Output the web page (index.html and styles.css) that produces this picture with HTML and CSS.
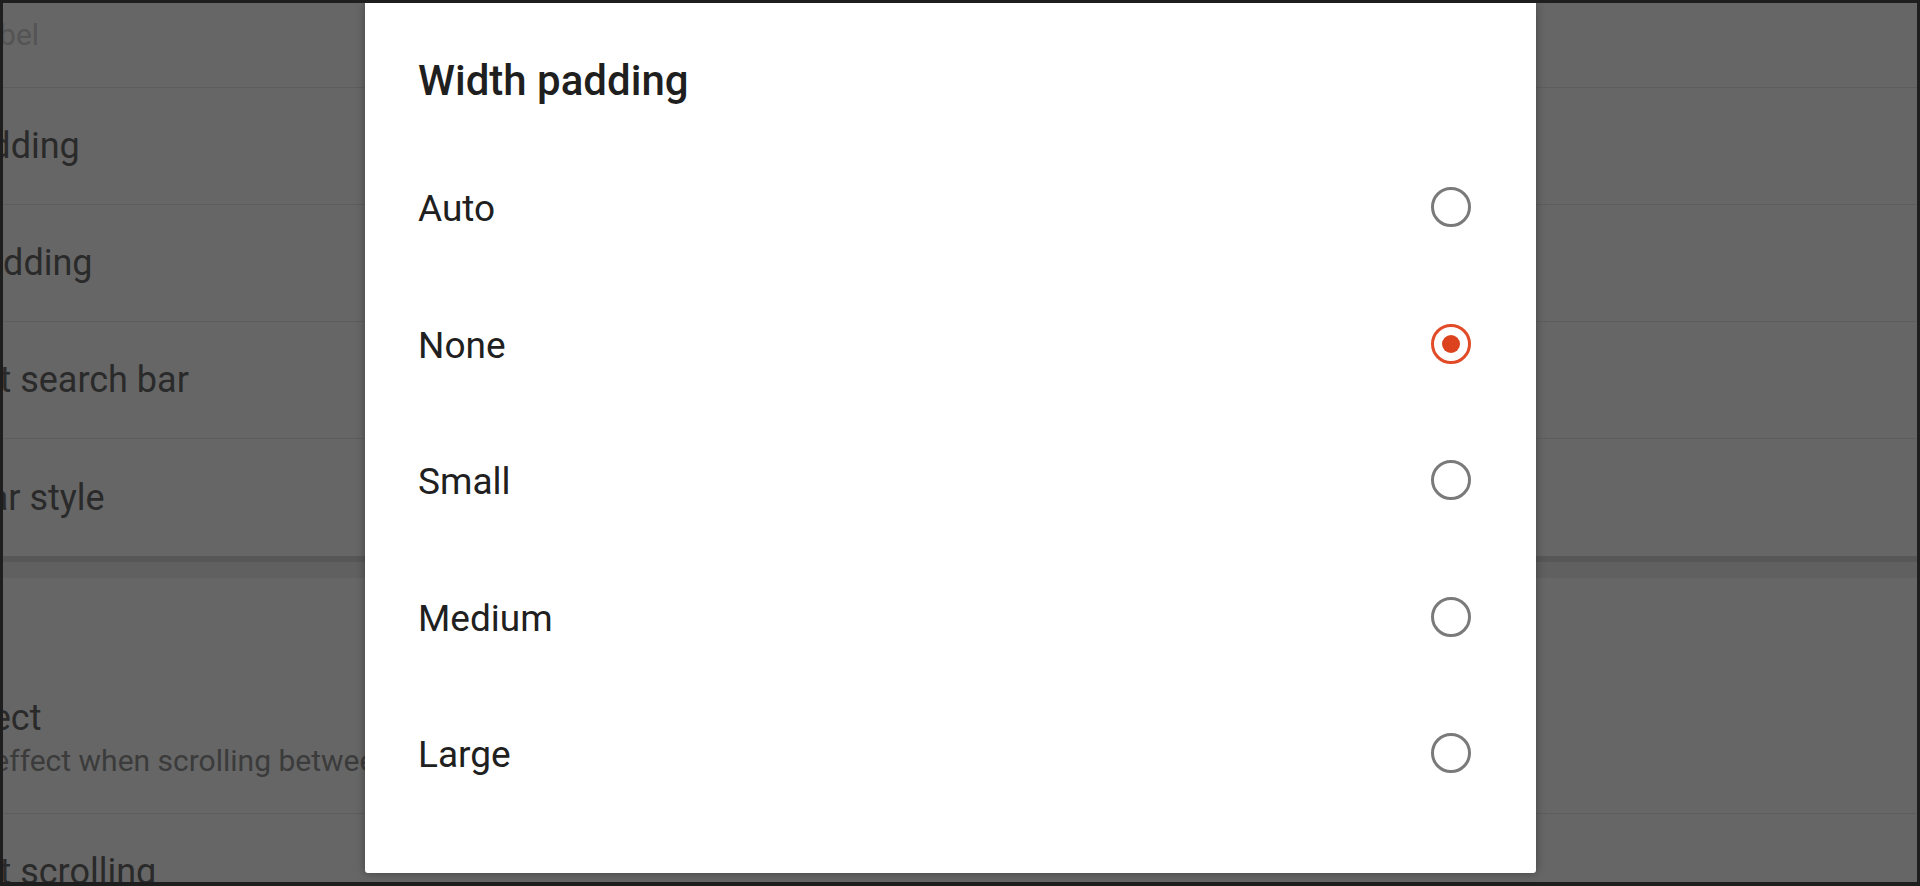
FILE: index.html
```html
<!DOCTYPE html>
<html lang="en">
<head>
<meta charset="utf-8">
<title>Width padding</title>
<link rel="stylesheet" href="styles.css">
</head>
<body>
<div class="screen">
  <div class="settings">
    <div class="row row-two first">
      <div class="row-title">Icon label</div>
      <div class="row-sub row-sub-muted">Hide app label</div>
    </div>
    <div class="row"><div class="row-title">Width padding</div></div>
    <div class="row"><div class="row-title">Height padding</div></div>
    <div class="row"><div class="row-title">Persistent search bar</div></div>
    <div class="row row-last"><div class="row-title">Search bar style</div></div>
    <div class="section-gap"></div>
    <div class="section-head"></div>
    <div class="row row-two">
      <div class="row-title">Scroll effect</div>
      <div class="row-sub">Animation effect when scrolling between pages</div>
    </div>
    <div class="row"><div class="row-title">Persistent scrolling</div></div>
  </div>

  <div class="dialog">
    <div class="dialog-title">Width padding</div>
    <div class="options">
      <div class="option"><span class="option-label">Auto</span><span class="radio"></span></div>
      <div class="option"><span class="option-label">None</span><span class="radio radio-on"></span></div>
      <div class="option"><span class="option-label">Small</span><span class="radio"></span></div>
      <div class="option"><span class="option-label">Medium</span><span class="radio"></span></div>
      <div class="option"><span class="option-label">Large</span><span class="radio"></span></div>
    </div>
  </div>
</div>
</body>
</html>
```

FILE: styles.css
```css
* { box-sizing: border-box; }

html, body {
  margin: 0;
  padding: 0;
  background: #1d1d1d;
}

body {
  font-family: Roboto, "Noto Sans", "Liberation Sans", sans-serif;
}

.screen {
  position: relative;
  width: 1920px;
  height: 886px;
  overflow: hidden;
  border-style: solid;
  border-color: #1e1e1e;
  border-width: 3px 3px 4px 3px;
  background: #666666;
}

/* dimmed settings page behind the dialog */
.settings {
  display: flex;
  flex-direction: column;
  margin-top: -55px;
  margin-left: -154px;
}

.row {
  display: flex;
  flex-direction: column;
  justify-content: center;
  height: 117px;
  border-bottom: 1px solid #5d5d5d;
  flex-shrink: 0;
}

.row-two {
  height: 140px;
  justify-content: flex-start;
  padding-top: 22px;
}

.row-last {
  border-bottom: none;
}

.row-title {
  font-size: 36px;
  line-height: 44px;
  color: #2a2a2a;
  white-space: nowrap;
}

.row-sub {
  font-size: 30px;
  line-height: 42px;
  color: #3b3b3b;
  white-space: nowrap;
}

.row-sub-muted {
  color: #545454;
}

.section-gap {
  height: 22px;
  flex-shrink: 0;
  background: linear-gradient(#575757 0, #575757 6px, #606060 6px, #606060 100%);
}

.section-head {
  height: 96px;
  flex-shrink: 0;
}

/* dialog */
.dialog {
  position: absolute;
  left: 362px;
  top: 0;
  width: 1171px;
  height: 870px;
  background: #ffffff;
  border-radius: 0 0 3px 3px;
  box-shadow: 0 0 10px rgba(0, 0, 0, 0.35);
  padding: 50px 65px 0 53px;
  display: flex;
  flex-direction: column;
}

.dialog-title {
  font-size: 42px;
  line-height: 56px;
  font-weight: 500;
  color: #1f1f1f;
}

.options {
  display: flex;
  flex-direction: column;
  margin-top: 30px;
}

.option {
  display: flex;
  align-items: center;
  justify-content: space-between;
  height: 136.5px;
}

.option-label {
  font-size: 37px;
  line-height: 44px;
  color: #202020;
  padding-top: 4px;
}

.radio {
  width: 40px;
  height: 40px;
  border-radius: 50%;
  border: 3.5px solid #7a7a7a;
  display: flex;
  align-items: center;
  justify-content: center;
}

.radio-on {
  border-color: #e14b27;
}

.radio-on::after {
  content: "";
  width: 18px;
  height: 18px;
  border-radius: 50%;
  background: #dc421d;
}
```
